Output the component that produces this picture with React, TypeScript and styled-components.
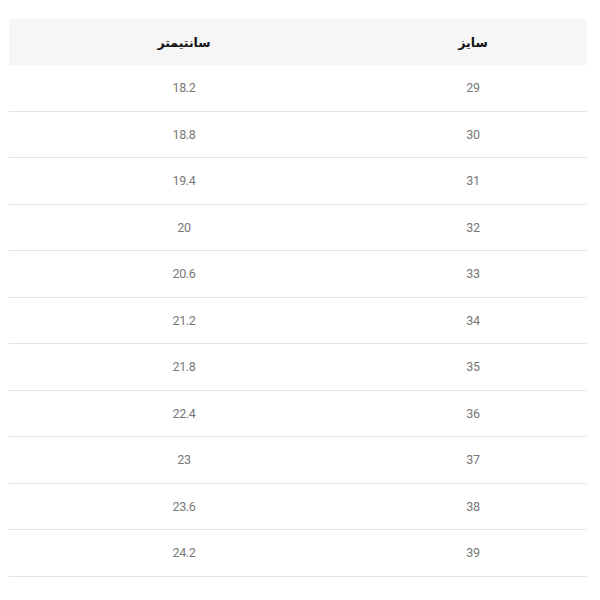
import React from "react";
import styled, { createGlobalStyle } from "styled-components";

const GlobalStyle = createGlobalStyle`
  html, body {
    margin: 0;
    padding: 0;
    background: #ffffff;
  }
`;

const rows: [string, string][] = [
  ["29", "18.2"],
  ["30", "18.8"],
  ["31", "19.4"],
  ["32", "20"],
  ["33", "20.6"],
  ["34", "21.2"],
  ["35", "21.8"],
  ["36", "22.4"],
  ["37", "23"],
  ["38", "23.6"],
  ["39", "24.2"],
];

const Page = styled.div`
  padding: 19px 13px 0 9px;
`;

const SizeTable = styled.table`
  direction: rtl;
  width: 578px;
  border-collapse: collapse;
  table-layout: fixed;
`;

const HeadCell = styled.th<{ $width: number }>`
  width: ${(p) => p.$width}px;
  height: 46px;
  padding: 0;
  background: #f6f6f6;
  color: #111;
  font-family: "DejaVu Sans", "Noto Sans", sans-serif;
  font-weight: 700;
  font-size: 12.5px;
  text-align: center;
  vertical-align: middle;
`;

const Row = styled.tr`
  border-bottom: 1px solid #e4e4e4;
`;

const Cell = styled.td`
  height: 45.5px;
  padding: 0;
  text-align: center;
  vertical-align: middle;
  color: #777;
  font-family: Roboto, "Liberation Sans", sans-serif;
  font-size: 12.5px;
  letter-spacing: -0.3px;
`;

export default function App() {
  return (
    <Page>
      <GlobalStyle />
      <SizeTable>
        <thead>
          <tr>
            <HeadCell $width={228}>سایز</HeadCell>
            <HeadCell $width={350}>سانتیمتر</HeadCell>
          </tr>
        </thead>
        <tbody>
          {rows.map(([size, cm]) => (
            <Row key={size}>
              <Cell>{size}</Cell>
              <Cell>{cm}</Cell>
            </Row>
          ))}
        </tbody>
      </SizeTable>
    </Page>
  );
}
